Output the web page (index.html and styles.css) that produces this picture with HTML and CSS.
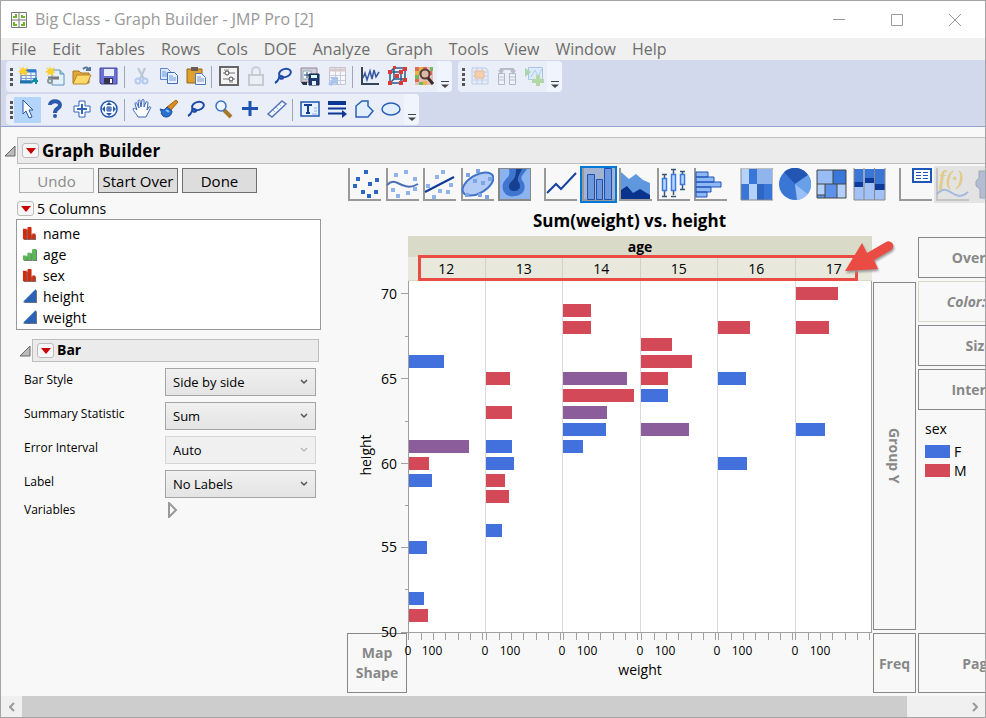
FILE: index.html
```html
<!DOCTYPE html>
<html lang="en">
<head>
  <meta charset="UTF-8">
  <meta name="viewport" content="width=device-width, initial-scale=1.0">
  <title>Big Class - Graph Builder - JMP Pro [2]</title>
  <link rel="stylesheet" href="styles.css">
</head>
<body>
  <div class="window">
    <header class="title-bar">
      <svg class="app-icon" width="16" height="16" viewBox="0 0 16 16"><path d="M.5.5h15v15H.5zM8 0v16M0 8h16" fill="#fff" stroke="#777"/><path d="M2 4h2V2h2v4H2zM10 6V3h2v1h2v2zM2 10h2v2h2v2H2zM10 14v-2h2v-2h2v4z" fill="#6fb52c"/></svg>
      <h1 class="window-title">Big Class - Graph Builder - JMP Pro [2]</h1>
      <div class="window-buttons">
        <button aria-label="Minimize"><svg width="12" height="12"><path d="M0 5.500h12"/></svg></button>
        <button aria-label="Maximize"><svg width="12" height="12"><path d="M.5.5h11v11H.5z"/></svg></button>
        <button aria-label="Close"><svg width="12" height="12"><path d="M0 0l12 12M12 0L0 12"/></svg></button>
      </div>
    </header>

    <nav class="menu-bar">
      <button>File</button>
      <button>Edit</button>
      <button>Tables</button>
      <button>Rows</button>
      <button>Cols</button>
      <button>DOE</button>
      <button>Analyze</button>
      <button>Graph</button>
      <button>Tools</button>
      <button>View</button>
      <button>Window</button>
      <button>Help</button>
    </nav>

    <div class="toolbars">
      <div class="toolbar-row">
        <div class="toolbar">
          <span class="grip"></span>
          <button aria-label="New data table"><svg viewBox="0 0 20 20"><path d="M3 4h15v11H3z" fill="#eaf4ff" stroke="#1d5fb4"/><path d="M3 5h15" stroke="#2a78d0" stroke-width="3"/><path d="M3 9.500h15M3 12.500h15M8 6v9M13 6v9" stroke="#8199c4"/><path d="M2 16h11" stroke="#1d74ac" stroke-width="3"/><path d="M18 12l-5 5m5-5v6m-2-3h4" stroke="#0f8ca8" stroke-width="2" fill="none"/><path d="M5 0l1 3 4-2-2 4 3 1-3 1 1 3-4-2-3 2 1-3-3-1 3-2-2-3 3 2z" fill="#ffd02c"/></svg></button>
          <button aria-label="New script"><svg viewBox="0 0 20 20"><path d="M7 4h8l4 4v11H7z" fill="#e4f1fc" stroke="#5c92be"/><path d="M15 4v4h4" fill="#a6cdea" stroke="#5c92be"/><path d="M3 12h11" stroke="#777" stroke-width="3"/><circle cx="5" cy="15" r="2" fill="none" stroke="#8a9a9a" stroke-width="2"/><path d="M5 0l1 3 4-2-2 4 3 1-3 1 1 3-4-2-3 2 1-3-3-1 3-2-2-3 3 2z" fill="#ffd02c"/></svg></button>
          <button aria-label="Open"><svg viewBox="0 0 20 20"><path d="M1 5h6l2 2h8v10H1z" fill="#e2a93a" stroke="#a97922"/><path d="M1 18L5 9h14l-4 9z" fill="#ffd96b" stroke="#b98526"/><path d="M11 3c3-3 6-1 6 2m-3-1h4V1" fill="none" stroke="#567a9c" stroke-width="2"/></svg></button>
          <button aria-label="Save"><svg viewBox="0 0 20 20"><path d="M1 2h17v16H2l-1-1z" fill="#6a72d6" stroke="#45459c"/><path d="M5 3h10v7H5z" fill="#e9ecff"/><path d="M5 12h9v6H5z" fill="#34344e"/><path d="M11 13h2v4h-2z" fill="#fff"/></svg></button>
          <span class="sep"></span>
          <button aria-label="Cut" disabled><svg viewBox="0 0 20 20"><path d="M6 2l6 11M13 2L8 13" stroke="#bcc5d4" stroke-width="2"/><circle cx="6" cy="15" r="2.500" fill="none" stroke="#b4c9ee" stroke-width="2"/><circle cx="13" cy="15" r="2.500" fill="none" stroke="#b4c9ee" stroke-width="2"/></svg></button>
          <button aria-label="Copy"><svg viewBox="0 0 20 20"><path d="M1.500 2.500h7l3 3v8h-10z" fill="#d9e9ff" stroke="#6386c6"/><path d="M8.500 6.500h7l3 3v8h-10z" fill="#e9f3ff" stroke="#3f6bb8"/><path d="M3 6h4M3 8h5M3 10h5M10 10h4M10 12h7M10 14h7" stroke="#6d98dd"/></svg></button>
          <button aria-label="Paste"><svg viewBox="0 0 20 20"><path d="M1 3h15v14H1z" fill="#e1a02c" stroke="#94651a"/><path d="M5 1h7v4H5z" fill="#6b5d51"/><path d="M9.500 7.500h6l4 4v7h-10z" fill="#edf4ff" stroke="#5377b4"/><path d="M11 11h4M11 13h7M11 15h7" stroke="#7a98c8"/></svg></button>
          <span class="sep"></span>
          <button aria-label="Preferences"><svg viewBox="0 0 20 20"><path d="M1 1h18v18H1z" fill="#f4f4f4" stroke="#666" stroke-width="2"/><path d="M4 7h12M4 13h12" stroke="#777"/><circle cx="8" cy="7" r="2" fill="#fff" stroke="#444"/><circle cx="12" cy="13" r="2" fill="#fff" stroke="#444"/><path d="M5 4h5M10 16h4" stroke="#888"/></svg></button>
          <button aria-label="Lock" disabled><svg viewBox="0 0 20 20"><path d="M6 9V5c0-5 8-5 8 0v4" fill="none" stroke="#ccd0d8" stroke-width="2"/><path d="M3 9h14v10H3z" fill="#eceef4" stroke="#c6cad2" stroke-width="2"/></svg></button>
          <button aria-label="Lasso rows"><svg viewBox="0 0 20 20"><ellipse cx="12" cy="7" rx="6" ry="4" fill="none" stroke="#1e4aa8" stroke-width="2" transform="rotate(-15 12 7)"/><path d="M7 9c-3 3 2 5 3 3s-3-3-4 0c-1 3-2 4-4 5" fill="none" stroke="#1e4aa8" stroke-width="2"/></svg></button>
          <button aria-label="Save window"><svg viewBox="0 0 20 20"><path d="M1 2h16v14H1z" fill="#d6cdd4" stroke="#8f8794"/><path d="M3 5h8v8H3z" fill="#f4fbff" stroke="#8ab"/><path d="M7 6v6M4 9h6" stroke="#246"/><path d="M9 8h10v11H9z" fill="#203a73" stroke="#152446"/><path d="M11 9h6v3h-6z" fill="#dff"/><path d="M12 15h4v4h-4z" fill="#e9f0ff"/><path d="M1 16h6v3H3z" fill="#28304e"/></svg></button>
          <button aria-label="Link table" disabled><svg viewBox="0 0 20 20"><path d="M2.500 1.500h16v17h-16z" fill="#f7f7fa" stroke="#c3c5cd"/><path d="M2 4h17" stroke="#d9c9cb" stroke-width="3"/><path d="M3 9.500h15M3 14.500h15M8.500 2v16M13.500 2v16" stroke="#ccd"/><path d="M1 18l4-4-2-3h8v8l-3-2-4 3z" fill="#a8c4ec"/></svg></button>
          <span class="sep"></span>
          <button aria-label="Distribution"><svg viewBox="0 0 20 20"><path d="M2 1v17h17" fill="none" stroke="#345" stroke-width="2"/><path d="M3 12l2-5 2 7 3-9 2 8 2-9 2 7 3-5" fill="none" stroke="#36599f" stroke-width="1.500"/></svg></button>
          <button aria-label="Cube plot"><svg viewBox="0 0 20 20"><path d="M3 6h11v11H3zM3 6l4-4h11v11l-4 4M14 6l4-4M7 2v11h11M7 13l-4 4" fill="none" stroke="#235d8d" stroke-width="1.500"/><path d="M1 4h4v4H1zM12 4h4v4h-4zM1 15h4v4H1zM12 15h4v4h-4zM6 0h3v3H6zM16 1h4v4h-4zM16 12h4v4h-4zM8 8h4v4H8z" fill="#df3838"/></svg></button>
          <button aria-label="Data filter"><svg viewBox="0 0 20 20"><path d="M1 1h18v18H1z" fill="#e8bfb5"/><path d="M1 1h4v4H1zM9 1h4v4H9zM1 13h4v3H1zM13 5h5v4h-5z" fill="#e06a58"/><path d="M5 5h4v4H5zM1 9h4v4H1zM16 1h3v4h-3zM5 16h4v3H5z" fill="#72ba60"/><path d="M5 1h4v4H5zM1 5h4v4H1zM9 15h4v4H9z" fill="#edb245"/><circle cx="11" cy="8" r="4.500" fill="#ddb9a8" stroke="#563d3b" stroke-width="2"/><path d="M14 12l5 6" stroke="#392e2c" stroke-width="3"/></svg></button>
          <button class="overflow" aria-label="More buttons"><svg viewBox="0 0 8 8"><path d="M0 4.500h8L4 8z" fill="#444"/><path d="M0 1.500h8" stroke="#444"/></svg></button>
        </div>
        <div class="toolbar">
          <span class="grip"></span>
          <button aria-label="Table" disabled><svg viewBox="0 0 20 20"><path d="M2 2h14l2 3v13H2z" fill="#e6edf9" stroke="#bacbe8"/><path d="M3 6h14M3 10h14M3 14h14M7 2v16M12 2v16" stroke="#c2cce3"/><path d="M5 5h9v7H5z" fill="#f3cfae" stroke="#ebb994"/></svg></button>
          <button aria-label="Join columns" disabled><svg viewBox="0 0 20 20"><path d="M1.500 7.500h6v11h-6zM12.500 7.500h6v11h-6z" fill="#eef2fa" stroke="#b1b8c5"/><path d="M2 11h5M2 14h5M13 11h5M13 14h5" stroke="#b5bfd0"/><path d="M4 6V3h12v3M2 4l2 3 2-3M14 4l2 3 2-3" fill="none" stroke="#b7bdc5" stroke-width="2"/></svg></button>
          <button aria-label="Add plot" disabled><svg viewBox="0 0 20 20"><path d="M4.500 1.500h14v12h-14z" fill="#dcebfa" stroke="#a9c4e4"/><path d="M7 11l4-7 3 6 4-7" fill="none" stroke="#b4cde8"/><path d="M1 2l6 4-6 5z" fill="#a9d4ae"/><path d="M12 9h4v4h4v4h-4v3h-4v-3H8v-4h4z" fill="#b3d7a6"/></svg></button>
          <button class="overflow" aria-label="More buttons"><svg viewBox="0 0 8 8"><path d="M0 4.500h8L4 8z" fill="#444"/><path d="M0 1.500h8" stroke="#444"/></svg></button>
        </div>
      </div>
      <div class="toolbar-row">
        <div class="toolbar">
          <span class="grip"></span>
          <button class="active" aria-label="Arrow"><svg viewBox="0 0 20 20"><path d="M5 1l10 10h-4l3 7-3 1-3-7-3 3z" fill="#fff" stroke="#2856a8"/></svg></button>
          <button aria-label="Help"><svg viewBox="0 0 20 20"><path d="M5 6c0-5 10-5 10 0 0 4-5 3-5 8" fill="none" stroke="#2a59ad" stroke-width="4"/><circle cx="10" cy="17" r="2" fill="#2a59ad"/></svg></button>
          <button aria-label="Crosshairs"><svg viewBox="0 0 20 20"><path d="M7 2h6v5h5v6h-5v5H7v-5H2V7h5z" fill="#fff" stroke="#3165b7"/><path d="M10 5v10M5 10h10" stroke="#3165b7" stroke-width="2"/></svg></button>
          <button aria-label="Scroller"><svg viewBox="0 0 20 20"><circle cx="10" cy="10" r="8" fill="#f5f9ff" stroke="#2556ab" stroke-width="1.500"/><path d="M10 3l3 3H7zM10 17l3-3H7zM3 10l3-3v6zM17 10l-3-3v6z" fill="#2556ab"/><path d="M8 8h4v4H8zM10 8v4M8 10h4" fill="none" stroke="#2556ab"/></svg></button>
          <span class="sep"></span>
          <button aria-label="Grabber"><svg viewBox="0 0 20 20"><path d="M6 18c-1-3-5-6-5-8 0-1 2-1 4 1L3 5c0-2 2-2 2 0l2 4-1-7c1-2 2-1 2 0l1 6 1-7c1-1 2-1 2 1v6l2-5c1-1 2 0 2 1l-1 7 2-3c2-1 2 1 1 2l-4 8z" fill="#fff" stroke="#3765b1"/></svg></button>
          <button aria-label="Brush"><svg viewBox="0 0 20 20"><path d="M17 1l2 2-7 8-4-3z" fill="#d98d21" stroke="#a4640e"/><path d="M1 10l4 1 3-3 5 4c0 4-3 6-6 6-3 0-4-2-5-4 1 0 0-2-1-4z" fill="#2b70cf" stroke="#1b4e9e"/><path d="M7 11l3 2" stroke="#8fc4ff" stroke-width="2"/></svg></button>
          <button aria-label="Lasso"><svg viewBox="0 0 20 20"><ellipse cx="12" cy="7" rx="6" ry="4" fill="none" stroke="#1e4aa8" stroke-width="2" transform="rotate(-15 12 7)"/><path d="M7 9c-3 3 2 5 3 3s-3-3-4 0c-1 3-2 4-4 5" fill="none" stroke="#1e4aa8" stroke-width="2"/></svg></button>
          <button aria-label="Magnifier"><svg viewBox="0 0 20 20"><path d="M11 11l7 7" stroke="#a8782a" stroke-width="4"/><circle cx="8" cy="7" r="5" fill="#eef6ff" stroke="#3974c5" stroke-width="1.500"/></svg></button>
          <button aria-label="Annotate plus"><svg viewBox="0 0 20 20"><path d="M10 2v15M2 9.500h16" stroke="#1c52b4" stroke-width="3"/></svg></button>
          <button aria-label="Ruler"><svg viewBox="0 0 20 20"><path d="M15 2l4 3L5 18l-4-3z" fill="#f2f6ff" stroke="#5376b7" stroke-width="1.500"/><path d="M12 5l2 2M9 8l2 2M6 11l2 2" stroke="#a5b8dc"/></svg></button>
          <span class="sep"></span>
          <button aria-label="Text"><svg viewBox="0 0 20 20"><path d="M1 3h18v14H1z" fill="#e7f1ff" stroke="#1f57ae" stroke-width="1.500"/><path d="M4 6h8M8 6v8M6 14h4" stroke="#123f92" stroke-width="2"/><path d="M14 9h3M14 12h3M12 15h5" stroke="#8ab0e6"/></svg></button>
          <button aria-label="Line"><svg viewBox="0 0 20 20"><path d="M1 4h18" stroke="#0b3894" stroke-width="4"/><path d="M1 9.500h18M1 14.500h16" stroke="#0b3894" stroke-width="2"/><path d="M15 11l5 4-5 4z" fill="#0b3894"/></svg></button>
          <button aria-label="Polygon"><svg viewBox="0 0 20 20"><path d="M2 18V7l6-5h6v5l5 5-5 6z" fill="#e0eeff" stroke="#2a5fb6" stroke-width="1.500"/></svg></button>
          <button aria-label="Ellipse"><svg viewBox="0 0 20 20"><ellipse cx="10" cy="10" rx="9" ry="6" fill="#e0eeff" stroke="#2a5fb6" stroke-width="1.500"/></svg></button>
          <button class="overflow" aria-label="More tools"><svg viewBox="0 0 8 8"><path d="M0 4.500h8L4 8z" fill="#444"/><path d="M0 1.500h8" stroke="#444"/></svg></button>
        </div>
      </div>
    </div>

    <main class="document">
      <div class="outline">
        <button class="disclosure" aria-label="Collapse Graph Builder"><svg width="12" height="12" viewBox="0 0 12 12"><path d="M11 1v10H1z"/></svg></button>
        <div class="outline-header">
          <button class="hotspot" aria-label="Graph Builder options"><svg width="10" height="6" viewBox="0 0 10 6"><path d="M0 0h10L5 6z"/></svg></button>
          <h2>Graph Builder</h2>
        </div>
      </div>

      <div class="builder">
        <aside class="control-panel">
          <div class="actions">
            <button disabled>Undo</button>
            <button class="wide">Start Over</button>
            <button>Done</button>
          </div>
          <div class="columns-title">
            <button class="hotspot" aria-label="Column options"><svg width="10" height="6" viewBox="0 0 10 6"><path d="M0 0h10L5 6z"/></svg></button>
            5 Columns
          </div>
          <ul class="column-list">
            <li><svg viewBox="0 0 16 16"><path d="M2 4h4v11H2zM6 2h4v13H6zM10 9h5v6h-5z" fill="#777"/><path d="M1 3h4v11H1zM6 1h4v13H6zM11 8h3v6h-3z" fill="#d52b0c"/></svg>name</li>
            <li><svg viewBox="0 0 16 16"><path d="M2 10h4v5H2zM6 7h5v8H6zM11 3h5v12h-5z" fill="#777"/><path d="M1 9h4v5H1zM6 6h4v8H6zM11 2h4v12h-4z" fill="#57bb55"/></svg>age</li>
            <li><svg viewBox="0 0 16 16"><path d="M2 4h4v11H2zM6 2h4v13H6zM10 9h5v6h-5z" fill="#777"/><path d="M1 3h4v11H1zM6 1h4v13H6zM11 8h3v6h-3z" fill="#d52b0c"/></svg>sex</li>
            <li><svg viewBox="0 0 16 16"><path d="M16 1v14H2z" fill="#777"/><path d="M15 0v14H1z" fill="#2c62b4"/><path d="M14 1L2 13" stroke="#5d93dc"/></svg>height</li>
            <li><svg viewBox="0 0 16 16"><path d="M16 1v14H2z" fill="#777"/><path d="M15 0v14H1z" fill="#2c62b4"/><path d="M14 1L2 13" stroke="#5d93dc"/></svg>weight</li>
          </ul>

          <div class="outline sub-outline">
            <button class="disclosure" aria-label="Collapse Bar"><svg width="12" height="12" viewBox="0 0 12 12"><path d="M11 1v10H1z"/></svg></button>
            <div class="outline-header">
              <button class="hotspot" aria-label="Bar options"><svg width="10" height="6" viewBox="0 0 10 6"><path d="M0 0h10L5 6z"/></svg></button>
              <h3>Bar</h3>
            </div>
          </div>
          <form class="properties">
            <label for="barStyle">Bar Style</label>
            <select id="barStyle"><option>Side by side</option></select>
            <label for="statistic">Summary Statistic</label>
            <select id="statistic"><option>Sum</option></select>
            <label for="errorInterval">Error Interval</label>
            <select id="errorInterval" disabled><option>Auto</option></select>
            <label for="barLabel">Label</label>
            <select id="barLabel"><option>No Labels</option></select>
            <span>Variables</span>
            <button type="button" class="expand" aria-label="Show variables"><svg width="10" height="16" viewBox="0 0 10 16"><path d="M1 1v14l7-7z"/></svg></button>
          </form>
        </aside>

        <section class="graph">
          <div class="palette">
            <div class="palette-group">
              <button aria-label="Points"><svg viewBox="0 0 33 33"><path class="axis" d="M1 0v32h32"/><path d="M16 2h4v4h-4zM8 9h4v4H8zM27 10h4v4h-4zM5 16h4v4H5zM20 14h4v4h-4zM13 22h4v4h-4zM26 22h4v4h-4zM19 26h4v4h-4z" fill="#2a67c0"/></svg></button>
              <button aria-label="Smoother"><svg viewBox="0 0 33 33"><path class="axis" d="M1 0v32h32"/><path d="M18 2h4v4h-4zM8 5h4v4H8zM27 9h4v4h-4zM5 20h4v4H5zM10 26h4v4h-4zM20 23h4v4h-4zM27 19h4v4h-4z" fill="#8fb4ec"/><path d="M1 17c6-6 10-2 15 0s9 3 16-1" fill="none" stroke="#4e6fb5" stroke-width="2"/></svg></button>
              <button aria-label="Line of fit"><svg viewBox="0 0 33 33"><path class="axis" d="M1 0v32h32"/><path d="M18 2h4v4h-4zM12 7h4v4h-4zM3 16h4v4H3zM15 21h4v4h-4zM26 15h4v4h-4zM9 27h4v4H9zM23 22h4v4h-4z" fill="#8fb4ec"/><path d="M2 24L31 9" stroke="#0d3a96" stroke-width="2"/></svg></button>
              <button aria-label="Ellipse"><svg viewBox="0 0 33 33"><path class="axis" d="M1 0v32h32"/><ellipse cx="17" cy="16" rx="17" ry="9" fill="#b4ccf5" stroke="#3f74c9" stroke-width="2" transform="rotate(-30 17 16)"/><path d="M5 5h4v4H5zM15 1h4v4h-4zM12 11h4v4h-4zM20 13h4v4h-4zM4 25h4v4H4zM17 25h4v4h-4zM24 27h4v4h-4zM27 9h4v4h-4z" fill="#7da5e6"/></svg></button>
              <button aria-label="Contour"><svg viewBox="0 0 33 33"><path d="M1 1h31v31H1z" fill="#8bb3f0"/><path d="M11 1c1 6 0 7-3 10-8 8-1 20 9 17 10-1 12-10 7-16-2-4 2-6 5-11z" fill="#3f75cf"/><path d="M18 1c0 6-1 9-4 12-6 5-2 11 3 10 6-1 6-6 3-10-1-4 2-7 4-12z" fill="#153f8f"/><path d="M1 1v31h32V0H0" fill="none" stroke="#888" stroke-width="2"/></svg></button>
            </div>
            <div class="palette-group">
              <button aria-label="Line"><svg viewBox="0 0 33 33"><path class="axis" d="M1 0v32h32"/><path d="M3 25l9-9 5 5L32 5" fill="none" stroke="#17429f" stroke-width="2"/></svg></button>
              <button class="active" aria-label="Bar"><svg viewBox="0 0 33 33"><path class="axis" d="M1 0v32h32"/><path d="M5.500 6.500h7v25h-7zM14.500 11.500h6v20h-6zM22.500.5h7v31h-7z" fill="#6f99de" stroke="#1e4fab"/></svg></button>
              <button aria-label="Area"><svg viewBox="0 0 33 33"><path class="axis" d="M1 0v32h32"/><path d="M2 4l8 7 7-5 7 6 7 3v16H2z" fill="#5f98df"/><path d="M2 22l6-4 6 7 7-4 10 6v4H2z" fill="#0a338d"/></svg></button>
              <button aria-label="Box plot"><svg viewBox="0 0 33 33"><path class="axis" d="M1 0v32h32"/><path d="M7.500 6v22M5 6.500h5M5 28.500h5M16.500 1v26M14 1.500h5M14 28.500h5M25.500 3v18M23 3.500h5M23 21.500h5" stroke="#395779" stroke-width="1.500"/><path d="M5.500 10.500h4v12h-4zM14.500 6.500h4v16h-4zM23.500 6.500h4v10h-4z" fill="#bad8ff" stroke="#397ade" stroke-width="1.500"/></svg></button>
              <button aria-label="Histogram"><svg viewBox="0 0 33 33"><path class="axis" d="M1 0v32h32"/><path d="M2 4h12v5H2zM2 9h18v5H2zM2 14h25v5H2zM2 19h15v5H2zM2 24h11v5H2z" fill="#8fb8f5" stroke="#1c52b8"/></svg></button>
            </div>
            <div class="palette-group palette-group-4">
              <button aria-label="Heatmap"><svg viewBox="0 0 33 33"><path d="M1 1h31v31H1z" fill="#8fb4ee"/><path d="M9 1h8v15H9zM1 16h8v16H1zM24 16h8v16h-8z" fill="#3877d7"/><path d="M1 1h8v15H1zM9 16h8v16H9z" fill="#b5d2fb"/><path d="M17 16h7v16h-7z" fill="#2e66c2"/><path d="M1 1v31h32V0H0" fill="none" stroke="#888"/></svg></button>
              <button aria-label="Pie"><svg viewBox="0 0 33 33"><circle cx="17" cy="16" r="16" fill="#3a77d5"/><path d="M17 16L6 4a16 16 0 0124 3z" fill="#2355b2"/><path d="M17 16l13-9a16 16 0 010 19z" fill="#67a0e9"/><path d="M17 16l13 10a16 16 0 01-11 6z" fill="#9bbff7"/></svg></button>
              <button aria-label="Treemap"><svg viewBox="0 0 33 33"><path d="M2 2h29v28H2z" fill="#5d91ea"/><path d="M2 2h16v14H2z" fill="#9abcf4"/><path d="M18 2h13v14H18z" fill="#3978da"/><path d="M2 16h8v11H2zM22 16h9v14h-9z" fill="#b2d0fa"/><path d="M2 2h29v28H2zM18 2v14M2 16h29M10 16v14M22 16v14M2 27h8" fill="none" stroke="#444"/></svg></button>
              <button aria-label="Mosaic"><svg viewBox="0 0 33 33"><path d="M1 1h31v31H1z" fill="#a2c2f7"/><path d="M1 1h9v13H1zM12 1h9v9h-9zM22 1h10v15H22z" fill="#3976d5"/><path d="M1 14h9v5H1zM12 10h9v5h-9zM22 16h10v6H22z" fill="#0c3b9c"/><path d="M1 0v32h31V0M11 0v32M21.500 0v32" fill="none" stroke="#888"/></svg></button>
            </div>
            <div class="palette-group palette-group-3">
              <button aria-label="Caption box"><svg viewBox="0 0 33 33"><path class="axis" d="M1 0v32h32"/><path d="M14 1h18v13H14z" fill="#fff" stroke="#1c57bb" stroke-width="2"/><path d="M17 4.500h5M17 7.500h5M17 10.500h5M24 4.500h5M24 7.500h5M24 10.500h5" stroke="#1c57bb"/></svg></button>
              <button aria-label="Formula" disabled><svg viewBox="0 0 33 33"><path class="axis" d="M1 0v32h32"/><text x="3" y="17" class="formula">f(·)</text><path d="M1 26c6-6 9-5 15-1s10 4 16-1" fill="none" stroke="#a5b9de" stroke-width="2"/></svg></button>
              <button aria-label="Map shapes" disabled><svg viewBox="0 0 33 33"><path d="M3 13l3-3V3h8l4 5h14v22H7v-9l-4-3z" fill="#b2bdd1" stroke="#9da8bd"/></svg></button>
            </div>
          </div>

          <h3 class="graph-title">Sum(weight) vs. height</h3>

          <div class="chart">
            <div class="group-x">
              <div class="group-name">age</div>
              <div class="group-levels">
                <span>12</span><span>13</span><span>14</span><span>15</span><span>16</span><span>17</span>
              </div>
              <div class="highlight"></div>
              <svg class="arrow" width="52" height="38" viewBox="0 0 52 38"><path d="M2 32L19 4l5 10L43 3a4 4 0 015 8L31 21l4 9z" fill="#ea4b42"/></svg>
            </div>

            <svg class="y-axis" viewBox="0 0 61 351">
              <path d="M54 12.500h7M54 97.500h7M54 182.500h7M54 266.500h7M54 351.500h7M58 55.500h3M58 140.500h3M58 224.500h3M58 308.500h3" stroke="#a0a0a0"/>
              <g text-anchor="end">
                <text x="50" y="18">70</text>
                <text x="50" y="103">65</text>
                <text x="50" y="188">60</text>
                <text x="50" y="271">55</text>
                <text x="50" y="356">50</text>
              </g>
              <text text-anchor="middle" transform="translate(24 174) rotate(-90)">height</text>
            </svg>

            <svg class="plot" viewBox="0 0 464 351">
              <path d="M0 0h464v351H0z" fill="#fff"/>
              <path class="grid-line" d="M77.500 0v351M154.500 0v351M232.500 0v351M309.500 0v351M387.500 0v351"/>
              <g>
                <rect class="f" x="1" y="74" width="35" height="13"/>
                <rect class="both" x="1" y="159" width="60" height="13"/>
                <rect class="m" x="1" y="176" width="20" height="13"/>
                <rect class="f" x="1" y="193" width="23" height="13"/>
                <rect class="f" x="1" y="260" width="18" height="13"/>
                <rect class="f" x="1" y="311" width="15" height="13"/>
                <rect class="m" x="1" y="328" width="19" height="13"/>
              </g>
              <g transform="translate(77)">
                <rect class="m" x="1" y="91" width="24" height="13"/>
                <rect class="m" x="1" y="125" width="26" height="13"/>
                <rect class="f" x="1" y="159" width="26" height="13"/>
                <rect class="f" x="1" y="176" width="28" height="13"/>
                <rect class="m" x="1" y="193" width="19" height="13"/>
                <rect class="m" x="1" y="209" width="23" height="13"/>
                <rect class="f" x="1" y="243" width="16" height="13"/>
              </g>
              <g transform="translate(154)">
                <rect class="m" x="1" y="23" width="28" height="13"/>
                <rect class="m" x="1" y="40" width="28" height="13"/>
                <rect class="both" x="1" y="91" width="64" height="13"/>
                <rect class="m" x="1" y="108" width="71" height="13"/>
                <rect class="both" x="1" y="125" width="44" height="13"/>
                <rect class="f" x="1" y="142" width="43" height="13"/>
                <rect class="f" x="1" y="159" width="20" height="13"/>
              </g>
              <g transform="translate(232)">
                <rect class="m" x="1" y="57" width="31" height="13"/>
                <rect class="m" x="1" y="74" width="51" height="13"/>
                <rect class="m" x="1" y="91" width="27" height="13"/>
                <rect class="f" x="1" y="108" width="27" height="13"/>
                <rect class="both" x="1" y="142" width="48" height="13"/>
              </g>
              <g transform="translate(309)">
                <rect class="m" x="1" y="40" width="32" height="13"/>
                <rect class="f" x="1" y="91" width="28" height="13"/>
                <rect class="f" x="1" y="176" width="29" height="13"/>
              </g>
              <g transform="translate(387)">
                <rect class="m" x="1" y="6" width="42" height="13"/>
                <rect class="m" x="1" y="40" width="33" height="13"/>
                <rect class="f" x="1" y="142" width="29" height="13"/>
              </g>
              <path d="M.5 0v351M463.500 0v351" stroke="#a0a0a0"/>
            </svg>

            <button class="zone group-y">Group Y</button>

            <div class="side-zones">
              <button class="zone">Overlay</button>
              <button class="zone in-use">Color: sex</button>
              <button class="zone">Size</button>
              <button class="zone">Interval</button>
              <div class="legend">
                <div class="legend-title">sex</div>
                <div class="legend-item"><span class="swatch swatch-f"></span>F</div>
                <div class="legend-item"><span class="swatch swatch-m"></span>M</div>
              </div>
            </div>

            <button class="zone map-shape">Map Shape</button>

            <svg class="x-axis" viewBox="0 0 464 60">
              <path d="M0 .5h464" stroke="#a0a0a0"/>
              <defs><path id="ticks" d="M.5 0v8M13.500 0v8M25.500 0v8M37.500 0v8M50.500 0v8M62.500 0v8M74.500 0v8"/></defs>
              <g stroke="#a0a0a0">
                <use href="#ticks"/>
                <use href="#ticks" x="78"/>
                <use href="#ticks" x="155"/>
                <use href="#ticks" x="233"/>
                <use href="#ticks" x="310"/>
                <use href="#ticks" x="387"/>
              </g>
              <g class="tick-labels" text-anchor="middle">
                <text x="0" y="23">0</text><text x="24" y="23">100</text>
                <text x="77" y="23">0</text><text x="102" y="23">100</text>
                <text x="154" y="23">0</text><text x="179" y="23">100</text>
                <text x="232" y="23">0</text><text x="257" y="23">100</text>
                <text x="309" y="23">0</text><text x="334" y="23">100</text>
                <text x="387" y="23">0</text><text x="412" y="23">100</text>
              </g>
              <text x="232" y="43" text-anchor="middle">weight</text>
            </svg>

            <button class="zone freq">Freq</button>
            <button class="zone page">Page</button>
          </div>
        </section>
      </div>
    </main>

    <div class="scrollbar">
      <button aria-label="Scroll left"><svg width="6" height="10" viewBox="0 0 6 10"><path d="M5 1L1 5l4 4"/></svg></button>
      <div class="scroll-track"><div class="scroll-thumb"></div></div>
      <button aria-label="Scroll right"><svg width="6" height="10" viewBox="0 0 6 10"><path d="M1 1l4 4-4 4"/></svg></button>
    </div>
  </div>
</body>
</html>
```

FILE: styles.css
```css
*{
  margin: 0;
  padding: 0;
  box-sizing: border-box;
}

body, button, select{
  font-family: "Open Sans", "Noto Sans", sans-serif;
  font-size: 14px;
  color: #000;
}

button{
  background: none;
  border: none;
}

svg{
  display: block;
  flex-shrink: 0;
}

.window{
  display: flex;
  flex-direction: column;
  min-height: 100vh;
  border: 1px solid #a5a5a5;
  background-color: #f8f8f8;
  overflow: hidden;
}

/* title bar and menu */
.title-bar{
  display: flex;
  align-items: center;
  height: 37px;
  padding-left: 10px;
  background-color: #fff;
}

.window-title{
  flex: 1;
  padding: 0 0 1px 8px;
  font-size: 16px;
  font-weight: normal;
  color: #999;
}

.window-buttons{
  display: flex;
  height: 100%;
  padding-right: 1px;
}

.window-buttons button{
  display: flex;
  align-items: center;
  justify-content: center;
  width: 58px;
}

.window-buttons path{
  fill: none;
  stroke: #999;
}

.menu-bar{
  display: flex;
  gap: 16px;
  height: 22px;
  padding-left: 10px;
  background-color: #f0f0f0;
}

.menu-bar button{
  font-size: 16px;
  line-height: 22px;
  color: #6d6d6d;
}

/* toolbars */
.toolbars{
  display: flex;
  flex-direction: column;
  gap: 2px;
  padding: 1px 5px;
  background-color: #d3d9ec;
  border-bottom: 1px solid #98a3cf;
}

.toolbar-row{
  display: flex;
  gap: 6px;
}

.toolbar{
  display: flex;
  align-items: center;
  height: 31px;
  border-radius: 4px;
  background-color: #e9eef8;
  overflow: hidden;
}

.toolbar button{
  display: flex;
  align-items: center;
  justify-content: center;
  width: 27px;
  height: 26px;
  padding-bottom: 2px;
}

.toolbar button svg{
  width: 20px;
  height: 20px;
  fill: none;
}

.toolbar .active{
  background-color: #b3d4fb;
}

.toolbar .grip{
  width: 3px;
  height: 18px;
  margin: 0 1px 0 4px;
  background: repeating-linear-gradient(#555 0 3px, transparent 3px 5px);
}

.toolbar .sep{
  width: 1px;
  height: 22px;
  margin: 0 3px 0 2px;
  background-color: #a0a5b5;
}

.toolbar .overflow{
  align-items: flex-end;
  width: 15px;
  height: 31px;
  padding-bottom: 4px;
  background-color: #f0f4fc;
}

.toolbar .overflow svg{
  width: 8px;
  height: 8px;
}

/* document */
.document{
  flex: 1;
  min-width: 1047px;
  padding-top: 10px;
}

.outline{
  display: flex;
  align-items: center;
  padding-left: 3px;
}

.disclosure{
  width: 13px;
}

.disclosure path{
  fill: #bbb;
  stroke: #666;
}

.outline-header{
  display: flex;
  flex: 1;
  align-items: center;
  height: 27px;
  padding-left: 4px;
  border: 1px solid #bdbdbd;
  background-color: #ebebeb;
}

.outline-header h2{
  padding-left: 3px;
  font-size: 17px;
  line-height: 24px;
}

.outline-header h3{
  padding-left: 3px;
  font-size: 14px;
  line-height: 20px;
}

.hotspot{
  display: flex;
  align-items: center;
  justify-content: center;
  width: 17px;
  height: 15px;
  border: 1px solid #bbb;
  border-radius: 3px;
  background-color: #f6f6f6;
}

.hotspot path{
  fill: #c80000;
}

.builder{
  display: flex;
}

/* left side */
.control-panel{
  flex: 0 0 345px;
  padding: 4px 25px 0 15px;
}

.actions{
  display: flex;
  gap: 4px;
  padding-left: 3px;
}

.actions button{
  width: 75px;
  height: 25px;
  border: 1px solid #707070;
  background-color: #ddd;
  font-size: 15px;
  line-height: 22px;
  white-space: nowrap;
}

.actions .wide{
  width: 80px;
}

.actions button:disabled{
  border-color: #adb2b5;
  background-color: #f4f4f4;
  color: #8a8a8a;
}

.columns-title{
  display: flex;
  align-items: center;
  gap: 3px;
  height: 26px;
  padding: 5px 0 0 1px;
}

.column-list{
  height: 111px;
  padding: 3px 5px;
  border: 1px solid #999;
  background-color: #fff;
  list-style: none;
}

.column-list li{
  display: flex;
  align-items: center;
  gap: 6px;
  line-height: 21px;
}

.column-list svg{
  width: 15px;
  height: 15px;
}

.sub-outline{
  margin: 9px 2px 0 0;
}

.sub-outline .outline-header{
  height: 23px;
}

.sub-outline h3{
  padding-bottom: 1px;
}

.properties{
  display: grid;
  grid-template-columns: 141px 151px;
  row-gap: 6px;
  padding: 6px 0 0 8px;
}

.properties label, .properties span{
  font-size: 12px;
  line-height: 24px;
}

.properties span{
  line-height: 12px;
}

.properties select{
  height: 28px;
  padding: 0 7px;
  border: 1px solid #a5a5a5;
  appearance: none;
  background: url("data:image/svg+xml,%3Csvg xmlns='http://www.w3.org/2000/svg' width='8' height='6'%3E%3Cpath d='M1 1l3 3 3-3' fill='none' stroke='%23555' stroke-width='1.5'/%3E%3C/svg%3E") no-repeat right 7px center, linear-gradient(#f0f0f0, #e4e4e4);
  font-size: 13px;
}

.properties select:disabled{
  border-color: #d5d5d5;
  background: url("data:image/svg+xml,%3Csvg xmlns='http://www.w3.org/2000/svg' width='8' height='6'%3E%3Cpath d='M1 1l3 3 3-3' fill='none' stroke='%23bbb' stroke-width='1.5'/%3E%3C/svg%3E") no-repeat right 7px center, #f0f0f0;
  color: #000;
  opacity: 1;
}

.expand{
  width: 16px;
  height: 12px;
  padding-left: 3px;
}

.expand svg{
  margin-top: -2px;
}

.expand path{
  fill: #f8f8f8;
  stroke: #999;
  stroke-width: 2;
}

/* graph */
.graph{
  flex: 1;
  min-width: 0;
  padding: 2px 8px 0 0;
}

.palette{
  display: flex;
  gap: 9px;
}

.palette-group{
  display: flex;
  flex: 0 0 187px;
  justify-content: space-between;
}

.palette-group-4{
  flex-basis: 150px;
}

.palette-group-3{
  flex-basis: 111px;
}

.palette button{
  width: 37px;
  height: 37px;
  padding: 2px;
}

.palette svg{
  width: 33px;
  height: 33px;
}

.palette .active{
  padding: 0;
  border: 2px solid #0078d7;
  background-color: #a5b3d3;
}

.palette button:disabled{
  background-color: #e3e3e3;
}

.axis{
  fill: none;
  stroke: #999;
  stroke-width: 2;
}

.palette button:disabled .axis{
  stroke: #c4c4c4;
}

.palette .formula{
  font: italic bold 20px "Liberation Serif", serif;
  fill: #e0cb88;
}

.graph-title{
  padding: 6px 127px 3px 0;
  font-size: 17px;
  line-height: 24px;
  text-align: center;
}

.chart{
  display: grid;
  grid-template-columns: 61px 1fr 46px 122px;
  grid-template-rows: 45px auto auto;
  padding-left: 1px;
}

.chart svg text{
  font-size: 14px;
}

.chart .tick-labels text{
  font-size: 12px;
}

.group-x{
  grid-row: 1;
  grid-column: 2;
  position: relative;
  z-index: 1;
  text-align: center;
}

.group-name{
  background-color: #dadac8;
  font-weight: bold;
  line-height: 21px;
}

.group-levels{
  display: flex;
  border-bottom: 1px solid #dadac8;
  background-color: #e8e8dc;
  line-height: 23px;
}

.group-levels span{
  flex: 1;
  border-right: 1px solid #d2d2c2;
}

.group-levels span:last-child{
  border-right: none;
}

.highlight{
  position: absolute;
  top: 19px;
  right: 14px;
  left: 10px;
  height: 26px;
  border: 3px solid #ea4b42;
}

.arrow{
  position: absolute;
  top: 3px;
  right: -23px;
  filter: drop-shadow(1px 2px 1px #999);
}

.y-axis{
  grid-row: 2;
  grid-column: 1;
  position: relative;
  z-index: 1;
  width: 100%;
  overflow: visible;
}

.plot{
  grid-row: 2;
  grid-column: 2;
  width: 100%;
}

.grid-line{
  stroke: #dadada;
}

.f{
  fill: #4270dd;
}

.m{
  fill: #d34958;
}

.both{
  fill: #8c5d9b;
}

.zone{
  border: 1px solid #888;
  color: #888;
  font-weight: bold;
}

.group-y{
  grid-row: 2;
  grid-column: 3;
  margin: 1px 2px 2px 1px;
  writing-mode: vertical-rl;
}

.side-zones{
  grid-row: 1 / 3;
  grid-column: 4;
  display: flex;
  flex-direction: column;
  gap: 3px;
  padding-top: 1px;
}

.side-zones .zone{
  height: 41px;
}

.side-zones .in-use{
  border-color: #dadac8;
  font-style: italic;
}

.legend{
  padding: 6px 7px 0;
}

.legend-title{
  line-height: 20px;
}

.legend-item{
  display: flex;
  align-items: center;
  gap: 4px;
  line-height: 19px;
}

.legend-title + .legend-item{
  margin-top: 3px;
}

.swatch{
  width: 25px;
  height: 13px;
}

.swatch-f{
  background-color: #4270dd;
}

.swatch-m{
  background-color: #d34958;
}

.map-shape, .freq, .page{
  grid-row: 3;
  height: 60px;
  margin-top: 1px;
}

.map-shape{
  grid-column: 1;
  width: 60px;
  line-height: 20px;
}

.x-axis{
  grid-row: 3;
  grid-column: 2;
  width: 100%;
  overflow: visible;
}

.freq{
  grid-column: 3;
  margin-right: 2px;
  margin-left: 1px;
}

.page{
  grid-column: 4;
}

/* horizontal scrollbar */
.scrollbar{
  display: flex;
  height: 21px;
  background-color: #f0f0f0;
}

.scrollbar button{
  display: flex;
  align-items: center;
  justify-content: center;
  width: 21px;
}

.scrollbar path{
  fill: none;
  stroke: #999;
  stroke-width: 2;
}

.scroll-track{
  flex: 1;
}

.scroll-thumb{
  width: 94%;
  height: 100%;
  background-color: #cdcdcd;
}
```
